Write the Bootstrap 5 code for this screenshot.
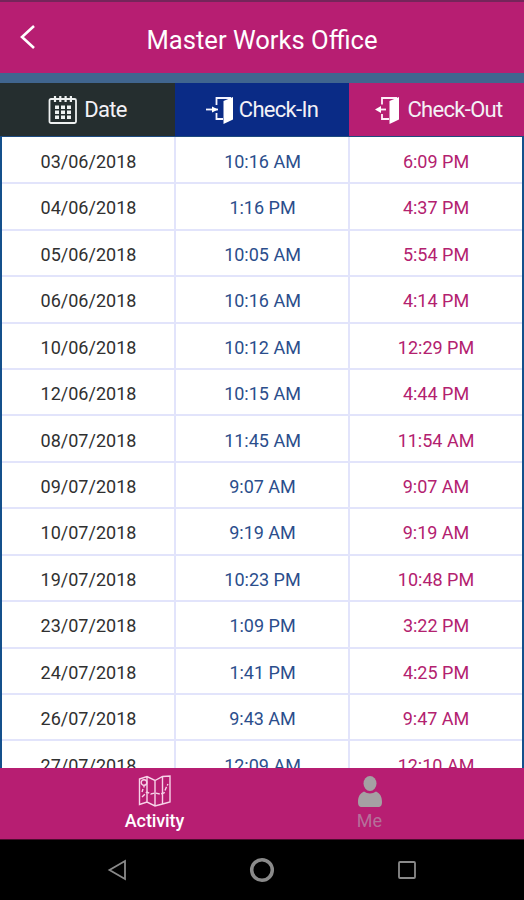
<!DOCTYPE html>
<html lang="en">
<head>
<meta charset="utf-8">
<meta name="viewport" content="width=device-width, initial-scale=1">
<title>Master Works Office</title>
<link href="https://cdn.jsdelivr.net/npm/bootstrap@5.3.0/dist/css/bootstrap.min.css" rel="stylesheet">
<style>
body{font-family:Roboto,"Liberation Sans",sans-serif;background:#000}
svg{display:block;flex:none}
.app{width:524px;height:900px}
.topbar{height:73px;background:#b71e72;border-top:2px solid #75255a;display:grid;grid-template-columns:56px 1fr 56px}
.topbar h1{font-size:25.6px;line-height:30px;padding-top:5px;font-weight:400}
.topbar .back{padding:0 0 2px 20px;border:0}
.band{height:10px;background:#40658f}
.cols{display:grid;grid-template-columns:175px 174px 175px}
.heads{height:54px;font-size:22px;line-height:26px;color:#f3f1f6;border-bottom:1px solid #1d4b80}
.heads span{letter-spacing:-.7px;padding-top:1px}
.h-date{background:#252e2f;gap:6px}
.h-in{background:#0a2b86;gap:5px}
.h-out{background:#b71e72;gap:7px;padding-left:4px}
.log{height:631px;background:#fff;border-left:2px solid #14508c;border-right:2px solid #14508c}
.log .cols{height:46.45px;grid-template-columns:174px 174px 1fr;font-size:18px;border-bottom:2px solid #e2e4fb;flex:none}
.log .cols:first-child{height:47.2px}
.log .cols>div{border-right:2px solid #e2e4fb;padding:3px 0 0 1px}
.log .cols>div:last-child{border-right:0;padding-left:0}
.c-date{color:#303030}
.c-in{color:#2b4e8c}
.c-out{color:#b3216f}
.tabs{height:72px;background:#b71e72;border-bottom:1px solid #4a0c2d}
.tabs a{width:215px;font-size:18px;line-height:22px;padding-top:7px;gap:2px}
.tabs .act{letter-spacing:-.1px}
.tabs .me{color:#b5709a}
.sysnav{height:60px}
</style>
<script src="https://cdn.jsdelivr.net/npm/bootstrap@5.3.0/dist/js/bootstrap.bundle.min.js"></script>
</head>
<body>
<div class="app d-flex flex-column overflow-hidden">
<header class="topbar align-items-center text-white flex-shrink-0">
  <button class="back btn text-white" aria-label="Back"><svg width="16" height="26" viewBox="0 0 16 26" fill="none" stroke="#fff" stroke-width="2.6"><path d="M14 2 2 13 14 24"/></svg></button>
  <h1 class="m-0 text-center text-nowrap">Master Works Office</h1>
</header>
<div class="band flex-shrink-0"></div>
<div class="heads cols flex-shrink-0">
  <div class="h-date d-flex align-items-center justify-content-center">
    <svg width="30" height="30" viewBox="0 0 30 30" fill="none" stroke="#eef1f1" stroke-width="1.8"><rect x="1.5" y="4" width="26.5" height="24" rx="1.5"/><path d="M7 1v6M12.3 1v6M17.6 1v6M22.9 1v6" stroke-width="2.2"/><path d="M7 12.300h16M7 17.300h16M7 22.300h16" stroke-width="3.600" stroke-dasharray="4 2"/></svg>
    <span>Date</span>
  </div>
  <div class="h-in d-flex align-items-center justify-content-center">
    <svg width="28" height="30" viewBox="0 0 28 30" fill="none" stroke="#f4f4ff" stroke-width="1.8"><path d="M10.500 10V3H25M10.500 18v6H17"/><path d="M17.500 6 27 2V24.500L17.500 29Z" fill="#fff" stroke="none"/><path d="M0 14.500H12"/><path d="m6 11.500 6 3-6 3Z" fill="#fff" stroke="none"/></svg>
    <span>Check-In</span>
  </div>
  <div class="h-out d-flex align-items-center justify-content-center">
    <svg width="26" height="30" viewBox="0 0 26 30" fill="none" stroke="#fff0fa" stroke-width="1.8"><path d="M8 9.500V3H23M8 19v5h7"/><path d="M15.500 6 25 2V24.500L15.500 29Z" fill="#fff" stroke="none"/><path d="M5 14.500h7"/><path d="m1 14.500 6-3.500v7Z" fill="#fff" stroke="none"/></svg>
    <span>Check-Out</span>
  </div>
</div>
<main class="log overflow-hidden d-flex flex-column flex-shrink-0" id="log"></main>
<nav class="tabs d-flex justify-content-center flex-shrink-0">
  <a class="act d-flex flex-column align-items-center text-white text-decoration-none fw-medium">
    <svg width="34" height="33" viewBox="0 0 34 33" fill="none" stroke="#f7d3e8" stroke-width="1.4"><path d="M1.500 4 9 1.500 17 5.500 24.500 1.500 32 1v26l-7.500 2L17 31 9 27 1.500 29.500ZM9 1.500V27M17 5.500v25.500M24.500 1.500V29"/><circle cx="6" cy="7.500" r="2.800"/><path d="M6 10.500v2M4 22l5-5 4 2 4-1 5 1 4-1 2-5 2-4M4 17l1-3" stroke-dasharray="4 1.500"/></svg>
    <span>Activity</span>
  </a>
  <a class="me d-flex flex-column align-items-center text-decoration-none">
    <svg width="26" height="33" viewBox="0 0 26 33" fill="#a5a0a3"><ellipse cx="13" cy="8.500" rx="6.500" ry="7.500"/><path d="M1 27c0-6 2.500-9 6-10.500 3.500 2.500 8.500 2.500 12 0 3.500 1.500 6 4.500 6 10.500 0 3-1 5-4 5H5c-3 0-4-2-4-5Z"/></svg>
    <span>Me</span>
  </a>
</nav>
<footer class="sysnav d-flex align-items-center justify-content-center flex-shrink-0">
  <svg width="310" height="30" viewBox="0 0 310 30" fill="none" stroke="#8a8a8a" stroke-width="1.800"><path d="M18 6v18L2.500 15Z"/><circle cx="155" cy="15" r="10.300" stroke-width="3.500"/><rect x="292" y="7" width="16" height="16" rx="1"/></svg>
</footer>
</div>
<script>
const rows=[["03/06/2018","10:16 AM","6:09 PM"],["04/06/2018","1:16 PM","4:37 PM"],["05/06/2018","10:05 AM","5:54 PM"],["06/06/2018","10:16 AM","4:14 PM"],["10/06/2018","10:12 AM","12:29 PM"],["12/06/2018","10:15 AM","4:44 PM"],["08/07/2018","11:45 AM","11:54 AM"],["09/07/2018","9:07 AM","9:07 AM"],["10/07/2018","9:19 AM","9:19 AM"],["19/07/2018","10:23 PM","10:48 PM"],["23/07/2018","1:09 PM","3:22 PM"],["24/07/2018","1:41 PM","4:25 PM"],["26/07/2018","9:43 AM","9:47 AM"],["27/07/2018","12:09 AM","12:10 AM"]];
const kinds=["c-date","c-in","c-out"];
document.getElementById("log").innerHTML=rows.map(r=>'<div class="cols">'+r.map((t,i)=>`<div class="${kinds[i]} d-flex align-items-center justify-content-center">${t}</div>`).join("")+'</div>').join("");
</script>
</body>
</html>
